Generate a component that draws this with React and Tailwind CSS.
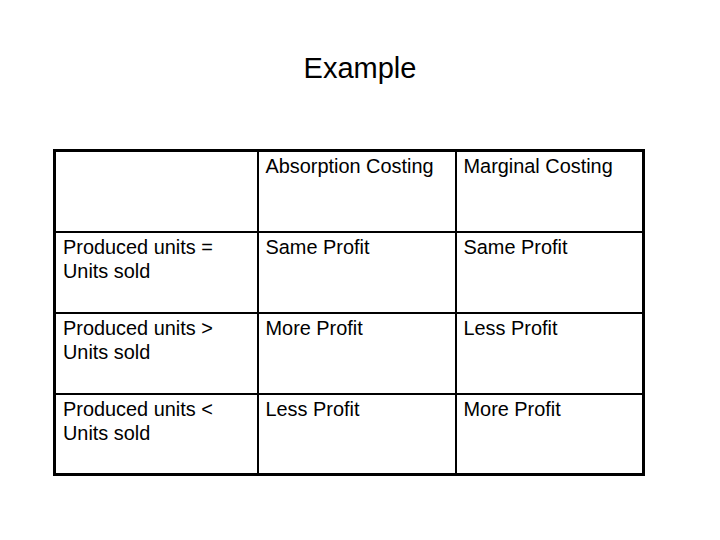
export default function App() {
  const rows = [
    ["", "Absorption Costing", "Marginal Costing"],
    ["Produced units = Units sold", "Same Profit", "Same Profit"],
    ["Produced units > Units sold", "More Profit", "Less Profit"],
    ["Produced units < Units sold", "Less Profit", "More Profit"],
  ];
  const widths = ["w-[203px]", "w-[198px]", "w-[188px]"];
  return (
    <div className="w-[720px] h-[540px] bg-white text-black" style={{ fontFamily: '"Liberation Sans", Arial, sans-serif' }}>
      <h1 className="pt-[48px] h-[149px] text-center text-[29px] leading-[40px]">Example</h1>
      <table className="ml-[53px] border-collapse border-[3px] border-black table-fixed">
        <tbody>
          {rows.map((r, i) => (
            <tr key={i} className="h-[81px]">
              {r.map((c, j) => (
                <td key={j} className={`${widths[j]} border-2 border-black align-top px-[7px] pt-[2px] text-[19.9px] leading-[24px]`}>
                  {c}
                </td>
              ))}
            </tr>
          ))}
        </tbody>
      </table>
    </div>
  );
}
